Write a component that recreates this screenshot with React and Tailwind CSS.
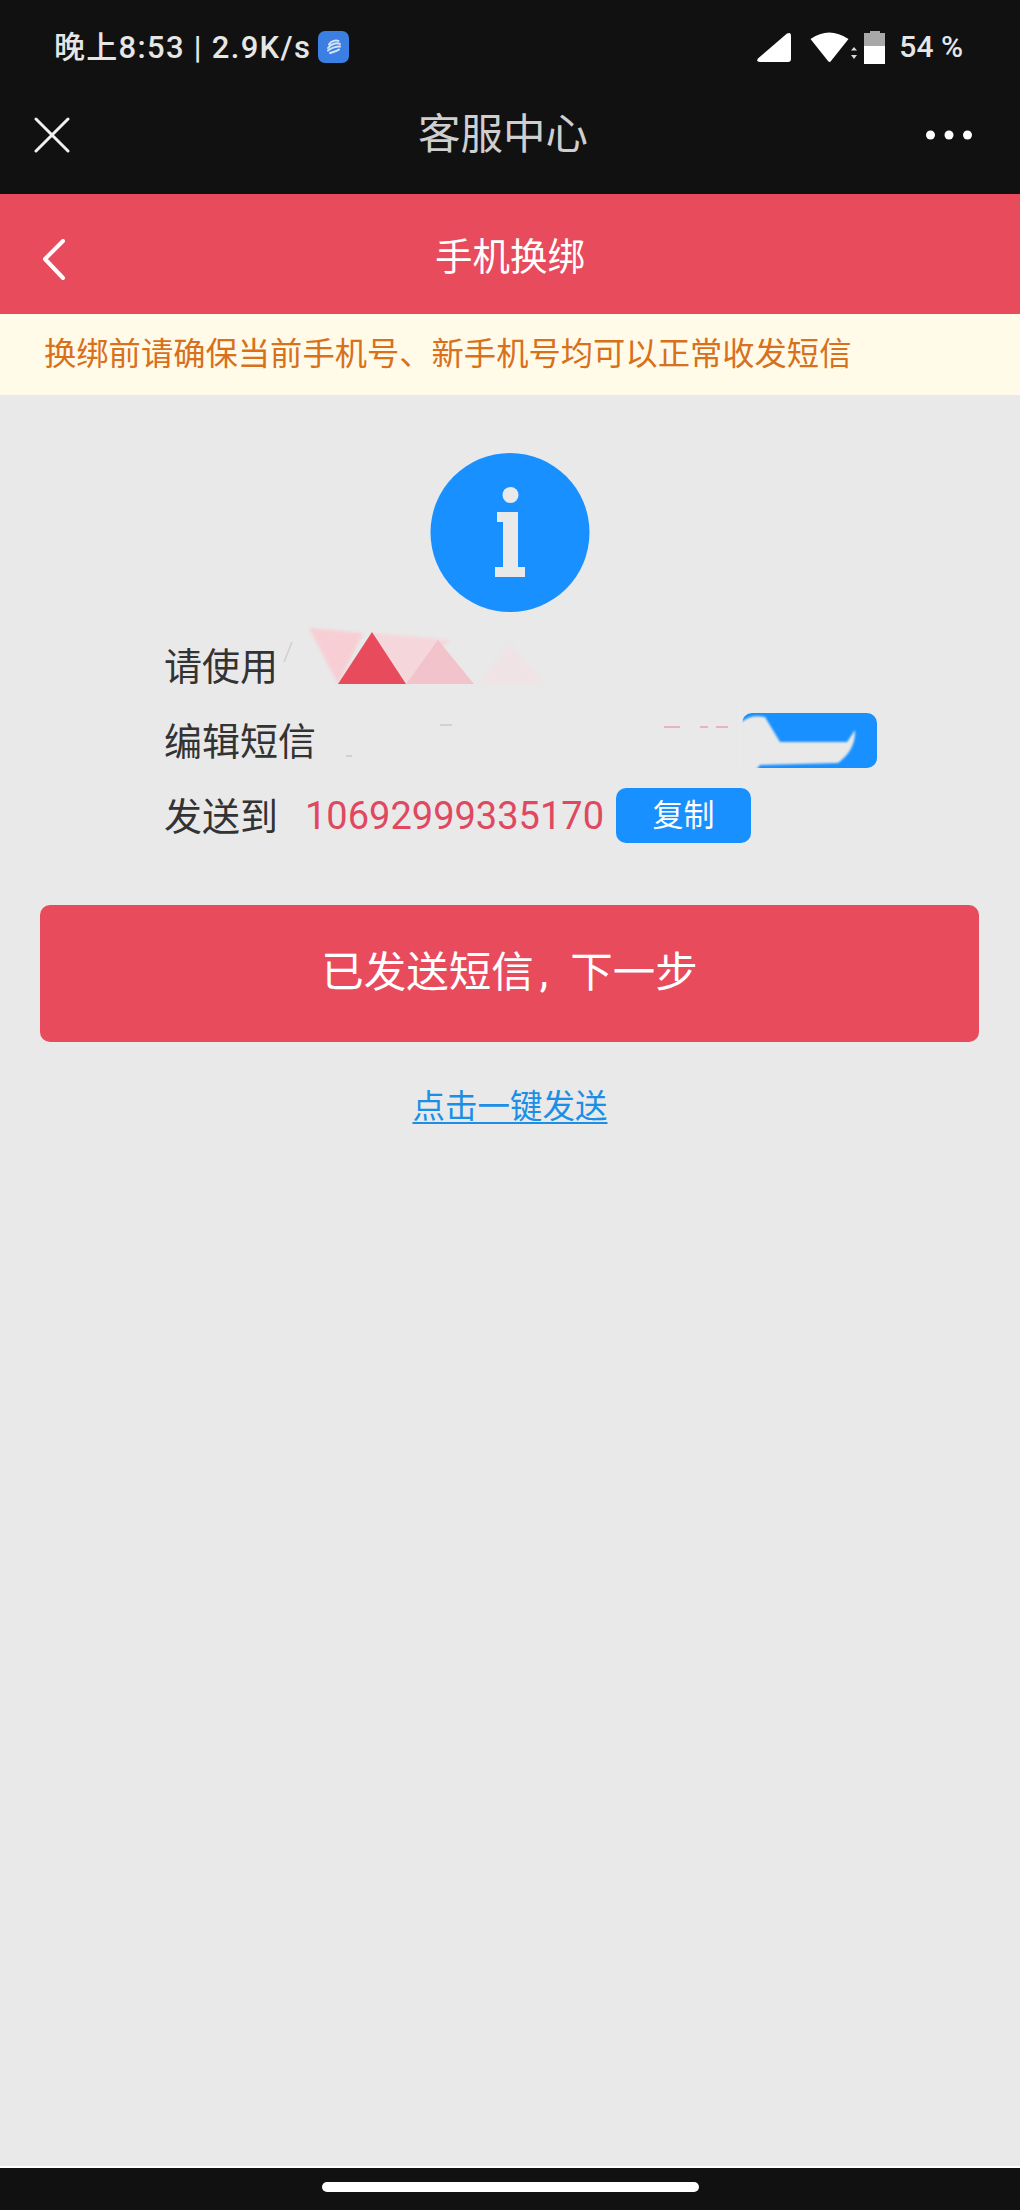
export default function App() {
  const font = { fontFamily: '"Roboto","Noto Sans CJK SC",sans-serif' };
  return (
    <div style={font} className="relative flex h-[2210px] w-[1020px] flex-col overflow-hidden bg-[#e9e9e9]">
      <header className="h-[194px] shrink-0 bg-[#111111]">
        <div className="flex h-[94px] items-center pl-[54px] pr-[57px] text-[#e6e6e6]">
          <span className="whitespace-nowrap text-[31px] font-medium leading-none tracking-[1.300px]">晚上8:53 | 2.9K/s</span>
          <span className="ml-[7px] flex h-[32px] w-[31px] items-center justify-center rounded-[7px] bg-[#3b7fe3]">
            <svg width="20" height="20" viewBox="0 0 20 20" fill="none" stroke="#d5e3f7" strokeWidth="2" strokeLinecap="round">
              <path d="M5 7.500 C7 4 12 2.500 14.500 4" />
              <path d="M4 11 C7 7 13 5 16 7" />
              <path d="M4 13.500 C7 11 13 9 16 9.500" />
              <path d="M6 16 C9 15 12.500 14.500 15 12.500" />
            </svg>
          </span>
          <div className="ml-auto flex items-center">
            <svg width="36" height="31" viewBox="0 0 36 31" fill="#ffffff">
              <path d="M31 1.500 Q35 -0.500 35 4 L35 27 Q35 30 32 30 L4 30 Q-0.500 30 2 26.500 Z" />
            </svg>
            <svg className="ml-[18px]" width="54" height="31" viewBox="0 0 54 31" fill="#ffffff">
              <path d="M0.500 7 Q19 -6 38.500 7 L21 29 Q19.500 31 18 29 Z" />
              <path d="M41 18.500 L44 15 L47 18.500 Z M41 23 L47 23 L44 27 Z" fill="#d8d8d8" />
            </svg>
            <svg width="22" height="33" viewBox="0 0 22 33">
              <path d="M6 0 L16 0 L16 2 L21 2 L21 15 L0 15 L0 2 L6 2 Z" fill="#a8a8a8" />
              <rect x="0" y="15" width="21" height="18" fill="#ffffff" />
            </svg>
            <span className="ml-[13px] whitespace-nowrap text-[30px] font-medium leading-none">54 %</span>
          </div>
        </div>
        <div className="flex h-[82px] items-center pl-[33px] pr-[48px]">
          <svg width="38" height="36" viewBox="0 0 38 36" fill="none" stroke="#f0f0f0" strokeWidth="3" strokeLinecap="round">
            <path d="M3 2 L35 34 M35 2 L3 34" />
          </svg>
          <span className="ml-[347px] text-[42.500px] leading-none text-[#cfcfcf]">客服中心</span>
          <svg className="ml-auto" width="46" height="10" viewBox="0 0 46 10" fill="#ffffff">
            <circle cx="4.500" cy="5" r="4.500" />
            <circle cx="23" cy="5" r="4.500" />
            <circle cx="41.500" cy="5" r="4.500" />
          </svg>
        </div>
      </header>

      <div className="grid h-[120px] shrink-0 grid-cols-[1fr_auto_1fr] items-center bg-[#e84b5c] pl-[42px] pt-[12px] text-white">
        <svg width="24" height="42" viewBox="0 0 24 42" fill="none" stroke="#ffffff" strokeWidth="4" strokeLinecap="round" strokeLinejoin="round">
          <path d="M21 2 L3 20 L21 39" />
        </svg>
        <span className="-ml-[42px] -mt-[4px] text-[37.500px] leading-none">手机换绑</span>
        <span />
      </div>

      <div className="flex h-[81px] shrink-0 items-center bg-[#fffbe8] pl-[44px] text-[32.300px] leading-none text-[#d8701c]">
        换绑前请确保当前手机号、新手机号均可以正常收发短信
      </div>

      <main className="relative flex-1">
        <svg className="mx-auto mt-[58px] block" width="160" height="160" viewBox="430 453 160 160">
          <circle cx="510" cy="532.500" r="79.500" fill="#1890ff" />
          <ellipse cx="510.500" cy="495" rx="8" ry="8" fill="#e9e9e9" />
          <path d="M497 512 H518 V567 H525 V577 H495 V567 H503 V522 H497 Z" fill="#e9e9e9" />
        </svg>

        <div className="mt-[15px] pl-[164px] text-[38px] leading-none text-[#333333]">
          <div className="flex h-[75px] items-center">
            <span className="pt-[3px]">请使用</span>
          </div>
          <div className="flex h-[75px] items-center">
            <span className="pt-[3px]">编辑短信</span>
            <span className="ml-[426px] h-[55px] w-[135px] rounded-[10px] bg-[#1890ff]" />
          </div>
          <div className="flex h-[75px] items-center">
            <span className="pt-[3px]">发送到</span>
            <span className="ml-[27px] text-[38px] text-[#e0485f]">10692999335170</span>
            <span className="ml-[12px] flex h-[55px] w-[135px] items-center justify-center rounded-[10px] bg-[#1890ff] text-[31px] text-white">复制</span>
          </div>
        </div>

        <button className="mx-[40px] mt-[52px] flex h-[137px] w-[939px] items-center justify-center rounded-[10px] bg-[#e84b5c] text-[42.500px] leading-none text-white">
          <span>已发送短信</span>
          <span className="ml-[6px] mr-[22px]">,</span>
          <span>下一步</span>
        </button>

        <div className="mt-[43px] flex h-[44px] items-center justify-center">
          <a className="text-[32.500px] leading-none text-[#1b8fe6] underline decoration-[2px] underline-offset-[4px]">点击一键发送</a>
        </div>

        <svg className="pointer-events-none absolute left-0 top-0" width="1020" height="400" viewBox="0 395 1020 400">
          <path d="M292 642 L284 662" stroke="#cfcfcf" strokeWidth="1.500" className="blur-[0.5px]" />
          <g className="blur-[1.500px]">
            <polygon points="309,628 363,633 338,684" fill="#f7ced3" />
            <polygon points="372,633 450,640 406,684" fill="#f5d6da" />
            <polygon points="510,643 479,684 544,684" fill="#efe3e5" />
          </g>
          <polygon points="372,632 338,684 406,684" fill="#e84b5c" />
          <polygon points="438,640 406,684 474,684" fill="#f3c3cb" />
          <path d="M738 708 L742 708 L742 722 Q750 714 765 717 L780 742 L847 742 L855 730 Q856 750 838 763 L760 765 L756 770 L738 770 Z" fill="#e9e9e9" className="blur-[1px]" />
          <path d="M664 727 H680 M700 727 H708 M716 727 H728" stroke="#e8b4bb" strokeWidth="2" />
          <path d="M440 725 H452 M346 756 H352" stroke="#c9c9c9" strokeWidth="1.500" />
        </svg>
      </main>

      <footer className="flex h-[44px] shrink-0 justify-center border-t-[2px] border-white bg-[#111111] pt-[14px]">
        <span className="h-[10px] w-[377px] rounded-full bg-white" />
      </footer>
    </div>
  );
}
